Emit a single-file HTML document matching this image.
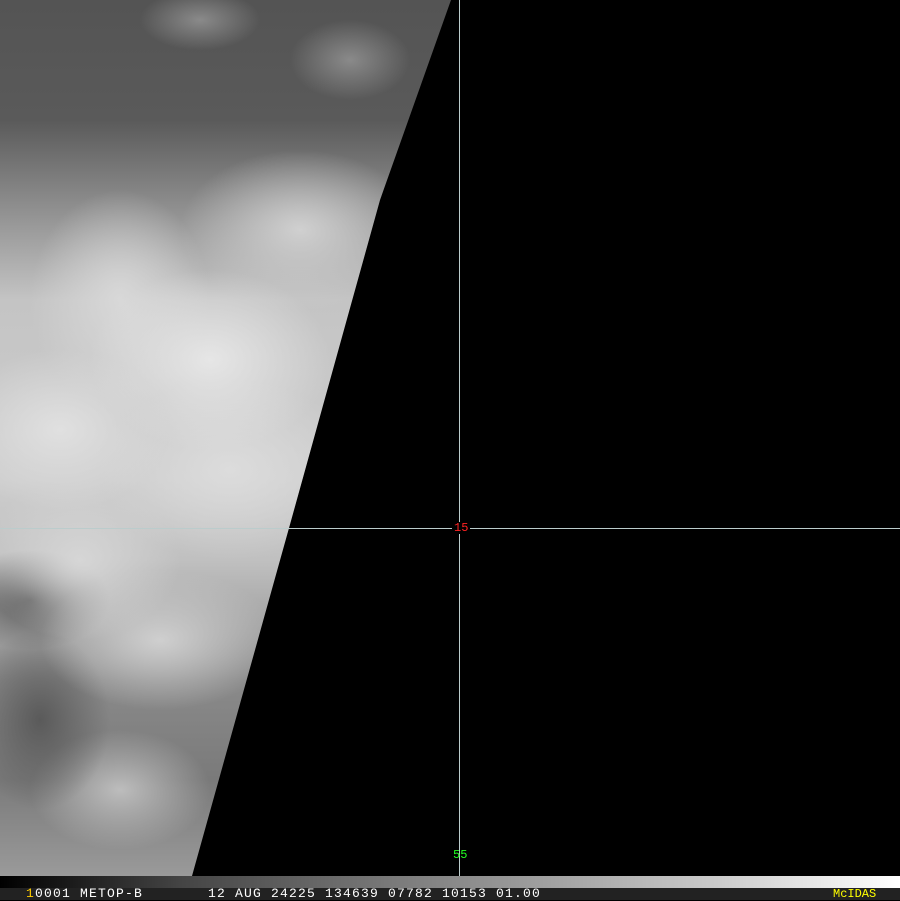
<!DOCTYPE html><html><head><style>
body{margin:0;width:900px;height:900px;background:#000;overflow:hidden;position:relative;font-family:"Liberation Mono",monospace}
#sat{position:absolute;left:0;top:0;width:452px;height:876px;clip-path:polygon(0 0,451px 0,380px 200px,289px 528px,192px 876px,0 876px);
background:
radial-gradient(ellipse 120px 90px at 210px 360px,#e6e6e6,transparent),
radial-gradient(ellipse 110px 80px at 60px 430px,#e0e0e0,transparent),
radial-gradient(ellipse 130px 90px at 230px 470px,#dcdcdc,transparent),
radial-gradient(ellipse 90px 110px at 120px 300px,#d8d8d8,transparent),
radial-gradient(ellipse 120px 80px at 300px 230px,#d0d0d0,transparent),
radial-gradient(ellipse 100px 80px at 80px 560px,#d6d6d6,transparent),
radial-gradient(ellipse 120px 70px at 160px 640px,#cfcfcf,transparent),
radial-gradient(ellipse 70px 90px at 40px 720px,#5a5a5a,transparent),
radial-gradient(ellipse 90px 60px at 120px 790px,#bdbdbd,transparent),
radial-gradient(ellipse 80px 50px at 30px 600px,#555,transparent),
radial-gradient(ellipse 60px 40px at 350px 60px,#8a8a8a,transparent),
radial-gradient(ellipse 60px 30px at 200px 20px,#8a8a8a,transparent),
linear-gradient(180deg,#545454 0px,#5a5a5a 120px,#8a8a8a 200px,#c4c4c4 300px,#cdcdcd 480px,#c0c0c0 560px,#8a8a8a 680px,#7a7a7a 780px,#9a9a9a 876px)}
.h{position:absolute;left:0;top:528px;width:900px;height:1px;background:#bcc}
.v{position:absolute;left:459px;top:0;width:1px;height:888px;background:#bcc}
#gb{position:absolute;left:0;top:876px;width:900px;height:12px;background:linear-gradient(90deg,#000,#444 20%,#888 50%,#ccc 80%,#fff)}
#tb{position:absolute;left:0;top:888px;width:900px;height:12px;background:#222;color:#fff;font-size:13px;line-height:12px;white-space:pre;letter-spacing:1.2px}
.l{position:absolute;font-size:12px;line-height:12px;background:#000}
</style></head><body>
<div id="sat"></div>
<div class="h"></div><div class="v"></div>
<div class="l" style="left:452px;top:522px;color:#f22;padding:0 2px">15</div>
<div class="l" style="left:453px;top:849px;color:#2f2;background:none">55</div>
<div id="gb"></div>
<div id="tb"><span style="position:absolute;left:26px;color:#fc0">1</span><span style="position:absolute;left:35px">0001 METOP-B</span><span style="position:absolute;left:208px">12 AUG 24225 134639 07782 10153 01.00</span><span style="position:absolute;left:833px;color:#ff0;letter-spacing:0;font-size:12px">McIDAS</span></div>
</body></html>
